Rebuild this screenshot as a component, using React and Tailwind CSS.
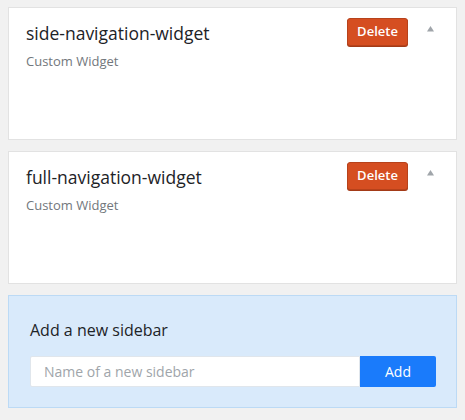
import React, { useState } from 'react'

const font = { fontFamily: '"Open Sans", "Noto Sans", sans-serif' }

function WidgetCard({ title }) {
  return (
    <div className="bg-white border border-[#e2e2e2] h-[133px] pl-[17px] pr-[22px] pt-[10px] flex items-start">
      <div className="flex-1">
        <h3 className="text-[17.5px] leading-[30px] text-[#1d2327] font-medium">{title}</h3>
        <p className="text-[13px] leading-[18px] mt-[4px] text-[#72777c]">Custom Widget</p>
      </div>
      <button className="h-[28px] w-[61px] rounded-[3px] bg-[#d54e21] border border-[#b7421b] text-white text-[13px] font-semibold shadow-[0_1px_0_#a33a17]">
        Delete
      </button>
      <svg className="ml-[19px] mt-[8px]" width="7" height="6" viewBox="0 0 7 6">
        <polygon points="3.5,0 7,5.5 0,5.5" fill="#a0a5aa" />
      </svg>
    </div>
  )
}

export default function App() {
  const [name, setName] = useState('')

  return (
    <div className="min-h-[420px] bg-[#f1f1f1] px-[8px] pt-[7px] pb-[10px] flex flex-col gap-[11px]" style={font}>
      <WidgetCard title="side-navigation-widget" />
      <WidgetCard title="full-navigation-widget" />
      <div className="bg-[#d9eafb] border border-[#bcdaf5] h-[113px] pl-[21px] pr-[20px] pt-[22px]">
        <h3 className="text-[16px] leading-[24px] text-[#1d2327] font-medium">Add a new sidebar</h3>
        <div className="mt-[14px] flex h-[31px]">
          <input
            value={name}
            onChange={e => setName(e.target.value)}
            placeholder="Name of a new sidebar"
            className="flex-1 min-w-0 bg-white border border-[#e0e6ec] rounded-l-[2px] px-[13px] text-[14px] text-[#32373c] placeholder:text-[#a0a5aa] outline-none"
          />
          <button className="w-[76px] bg-[#1a7bfb] rounded-r-[2px] text-white text-[14px]">Add</button>
        </div>
      </div>
    </div>
  )
}
